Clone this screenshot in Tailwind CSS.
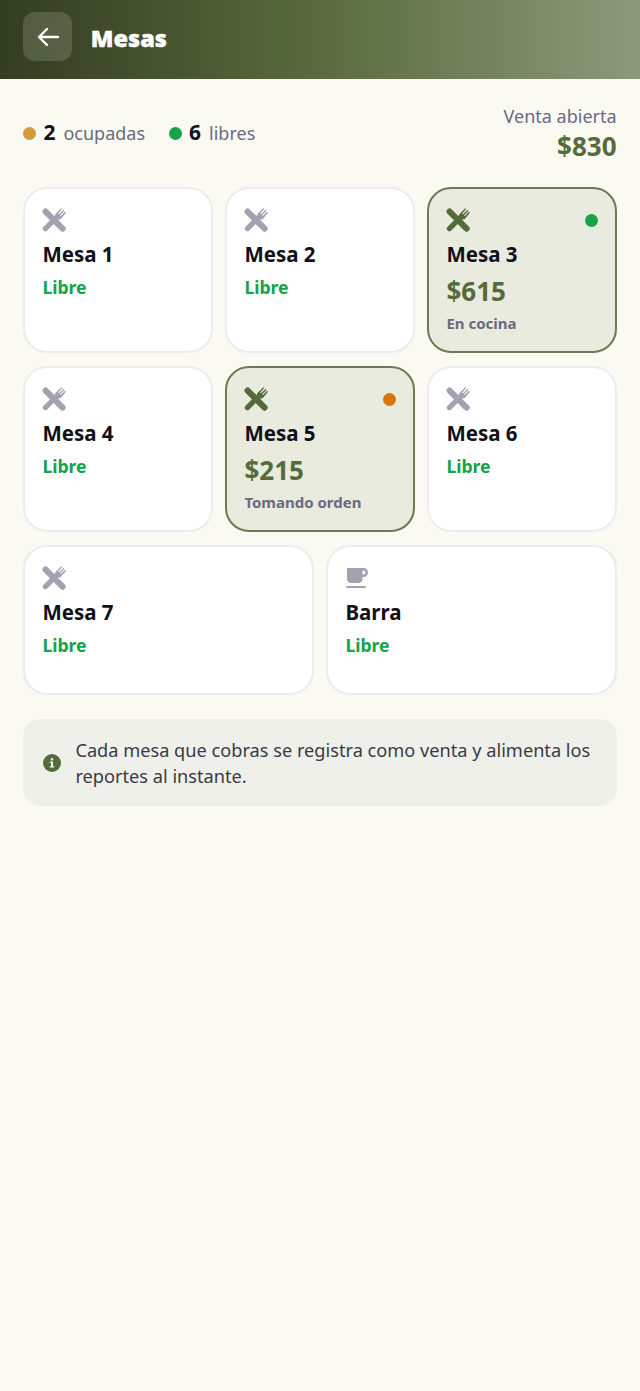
<!DOCTYPE html>
<html lang="es"><head>
<meta charset="utf-8"/>
<meta content="width=device-width, initial-scale=1.0" name="viewport"/>
<title>Mesas</title>
<script src="https://cdn.jsdelivr.net/npm/@tailwindcss/browser@4"></script>
</head>
<body class="bg-[#fafaf3] text-[#111118] font-['Noto_Sans',sans-serif] min-h-[1391px]">
<svg class="hidden" xmlns="http://www.w3.org/2000/svg">
<symbol id="utensils" viewBox="0 0 24 24">
<line x1="3.6" y1="3.6" x2="20.6" y2="20.6" stroke="currentColor" stroke-width="6.2" stroke-linecap="round"/>
<line x1="3.4" y1="20.6" x2="15" y2="9" stroke="currentColor" stroke-width="5.2" stroke-linecap="round"/>
<path d="M13 7 L14 5.4 L19.2 .2 L20.2 1 L16.2 5.4 L17 6.2 L21.4 2 L22.4 3 L18 7.2 L18.8 8 L23 3.8 L24 4.8 L18.6 11.2 L16 11.6 Z" fill="currentColor"/>
</symbol>
<symbol id="cup" viewBox="0 0 24 24">
<path d="M2 2 H18.5 C21 2 23 4 23 6.5 C23 9 21 11 18.5 11 H17.5 V13 C17.5 15.8 15.5 17 13 17 H6.5 C4 17 2 15.5 2 13 Z M17.5 4.5 V8.5 H18.5 C19.6 8.5 20.5 7.6 20.5 6.5 C20.5 5.4 19.6 4.5 18.5 4.5 Z" fill="currentColor" fill-rule="evenodd"/>
<rect x="1" y="20" width="20" height="2" rx="1" fill="currentColor"/>
</symbol>
</svg>

<header class="h-[79px] bg-gradient-to-r from-[#333d20] via-[#5a6b3e] to-[#8d9a7a] flex items-center px-[23.4px] pt-3 pb-[18px] gap-[18.4px]">
<button class="w-[49px] h-[49px] shrink-0 rounded-xl bg-white/15 flex items-center justify-center text-white">
<svg class="w-6 h-6" fill="none" stroke="currentColor" viewBox="0 0 24 24" xmlns="http://www.w3.org/2000/svg"><path stroke-linecap="round" stroke-linejoin="round" stroke-width="2.4" d="M11 4l-8 8 8 8M3 12h19"></path></svg>
</button>
<h1 class="mt-1 text-[23.5px] font-black text-white [-webkit-text-stroke:0.4px_white]">Mesas</h1>
</header>

<main class="px-[23.4px]">
<section class="flex items-center justify-between h-[108px]">
<div class="flex items-center text-[18px]">
<span class="w-[13px] h-[13px] rounded-full bg-[#d49b3c]"></span>
<span class="ml-[7px] text-[21px] font-bold">2</span>
<span class="ml-2 text-[#6b6a7e]">ocupadas</span>
<span class="ml-6 w-[13px] h-[13px] rounded-full bg-[#16a34a]"></span>
<span class="ml-[7px] text-[21px] font-bold">6</span>
<span class="ml-2 text-[#6b6a7e]">libres</span>
</div>
<div class="text-right mt-[2px]">
<p class="text-[18px] leading-6 text-[#6b6a7e]">Venta abierta</p>
<p class="text-[26px] leading-9 font-bold text-[#556b3a]">$830</p>
</div>
</section>

<section class="grid grid-cols-6 gap-[12.8px]">
<article class="col-span-2 h-[166.2px] rounded-[24px] border-2 border-[#ececee] bg-white px-[17px] pt-[19px]">
<svg class="w-6 h-6 text-[#a3a2b0]"><use href="#utensils"></use></svg>
<h2 class="mt-2 text-[20.5px] leading-7 font-bold">Mesa 1</h2>
<p class="mt-[7px] text-[17.6px] leading-6 font-bold text-[#16a34a]">Libre</p>
</article>
<article class="col-span-2 h-[166.2px] rounded-[24px] border-2 border-[#ececee] bg-white px-[17px] pt-[19px]">
<svg class="w-6 h-6 text-[#a3a2b0]"><use href="#utensils"></use></svg>
<h2 class="mt-2 text-[20.5px] leading-7 font-bold">Mesa 2</h2>
<p class="mt-[7px] text-[17.6px] leading-6 font-bold text-[#16a34a]">Libre</p>
</article>
<article class="relative col-span-2 h-[166.2px] rounded-[24px] border-2 border-[#6a7c50] bg-[#e9ebdf] px-[17px] pt-[19px]">
<span class="absolute right-[16.5px] top-[25px] w-[13px] h-[13px] rounded-full bg-[#16a34a]"></span>
<svg class="w-6 h-6 text-[#556b3a]"><use href="#utensils"></use></svg>
<h2 class="mt-2 text-[20.5px] leading-7 font-bold">Mesa 3</h2>
<p class="mt-[5px] text-[26px] leading-9 font-bold text-[#556b3a]">$615</p>
<p class="mt-1 text-[15px] leading-5 font-bold text-[#6b6a7e]">En cocina</p>
</article>

<article class="col-span-2 h-[166.2px] rounded-[24px] border-2 border-[#ececee] bg-white px-[17px] pt-[19px]">
<svg class="w-6 h-6 text-[#a3a2b0]"><use href="#utensils"></use></svg>
<h2 class="mt-2 text-[20.5px] leading-7 font-bold">Mesa 4</h2>
<p class="mt-[7px] text-[17.6px] leading-6 font-bold text-[#16a34a]">Libre</p>
</article>
<article class="relative col-span-2 h-[166.2px] rounded-[24px] border-2 border-[#6a7c50] bg-[#e9ebdf] px-[17px] pt-[19px]">
<span class="absolute right-[16.5px] top-[25px] w-[13px] h-[13px] rounded-full bg-[#d97706]"></span>
<svg class="w-6 h-6 text-[#556b3a]"><use href="#utensils"></use></svg>
<h2 class="mt-2 text-[20.5px] leading-7 font-bold">Mesa 5</h2>
<p class="mt-[5px] text-[26px] leading-9 font-bold text-[#556b3a]">$215</p>
<p class="mt-1 text-[15px] leading-5 font-bold text-[#6b6a7e]">Tomando orden</p>
</article>
<article class="col-span-2 h-[166.2px] rounded-[24px] border-2 border-[#ececee] bg-white px-[17px] pt-[19px]">
<svg class="w-6 h-6 text-[#a3a2b0]"><use href="#utensils"></use></svg>
<h2 class="mt-2 text-[20.5px] leading-7 font-bold">Mesa 6</h2>
<p class="mt-[7px] text-[17.6px] leading-6 font-bold text-[#16a34a]">Libre</p>
</article>

<article class="col-span-3 h-[150px] rounded-[24px] border-2 border-[#ececee] bg-white px-[17px] pt-[19px]">
<svg class="w-6 h-6 text-[#a3a2b0]"><use href="#utensils"></use></svg>
<h2 class="mt-2 text-[20.5px] leading-7 font-bold">Mesa 7</h2>
<p class="mt-[7px] text-[17.6px] leading-6 font-bold text-[#16a34a]">Libre</p>
</article>
<article class="col-span-3 h-[150px] rounded-[24px] border-2 border-[#ececee] bg-white px-[17px] pt-[19px]">
<svg class="w-6 h-6 text-[#a3a2b0]"><use href="#cup"></use></svg>
<h2 class="mt-2 text-[20.5px] leading-7 font-bold">Barra</h2>
<p class="mt-[7px] text-[17.6px] leading-6 font-bold text-[#16a34a]">Libre</p>
</article>
</section>

<section class="mt-6 h-[87px] rounded-[18px] bg-[#f0f0ea] flex items-center px-5 pt-[2px] gap-[14px]">
<svg class="w-[18px] h-[18px] shrink-0" viewBox="0 0 18 18" xmlns="http://www.w3.org/2000/svg"><circle cx="9" cy="9" r="9" fill="#556b3a"/><rect x="8" y="7.6" width="2" height="5.4" fill="#f0f0ea"/><rect x="6.8" y="7.6" width="3" height="1.3" fill="#f0f0ea"/><rect x="6.8" y="12.2" width="4.4" height="1.3" fill="#f0f0ea"/><circle cx="9" cy="5.2" r="1.2" fill="#f0f0ea"/></svg>
<p class="text-[18.2px] leading-[26px] text-[#3a3a46]">Cada mesa que cobras se registra como venta y alimenta los reportes al instante.</p>
</section>
</main>
</body></html>
